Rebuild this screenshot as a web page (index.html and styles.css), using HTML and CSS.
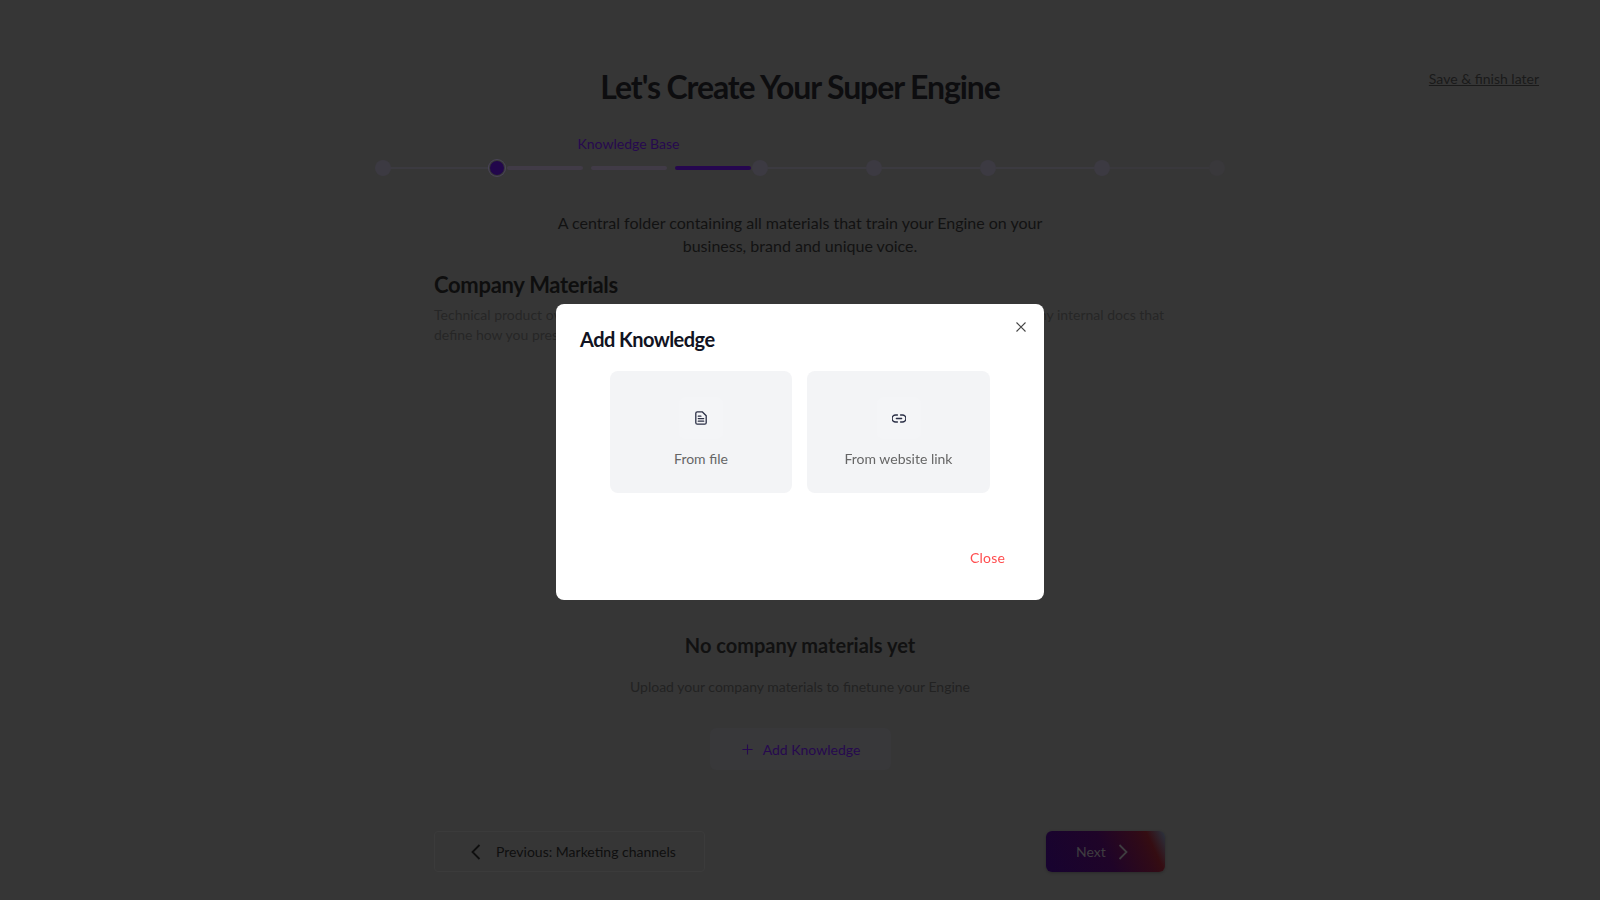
FILE: index.html
```html
<!DOCTYPE html>
<html lang="en">
<head>
<meta charset="utf-8">
<title>Let's Create Your Super Engine</title>
<link rel="stylesheet" href="styles.css">
</head>
<body>
<div class="page">
  <header class="header">
    <span></span>
    <h1 class="title">Let's Create Your Super Engine</h1>
    <a class="save-link" href="#">Save &amp; finish later</a>
  </header>

  <div class="stepper">
    <span class="step-label">Knowledge Base</span>
    <span class="dot"></span><span class="line"></span>
    <span class="dot dot-active"></span>
    <span class="segments"><i class="seg"></i><i class="seg"></i><i class="seg seg-on"></i></span>
    <span class="dot"></span><span class="line"></span>
    <span class="dot"></span><span class="line"></span>
    <span class="dot"></span><span class="line"></span>
    <span class="dot"></span><span class="line line-faint"></span>
    <span class="dot dot-faint"></span>
  </div>

  <p class="intro">A central folder containing all materials that train your Engine on your<br>business, brand and unique voice.</p>

  <main class="content">
    <h2 class="section-title">Company Materials</h2>
    <p class="section-text">Technical product overviews, feature lists, brand guidelines, case studies, tips, customer stories or any internal docs that<br>define how you present your company to customers.</p>

    <div class="empty">
      <h3 class="empty-title">No company materials yet</h3>
      <p class="empty-text">Upload your company materials to finetune your Engine</p>
      <button class="add-btn">
        <svg class="add-icon" viewBox="0 0 12 12"><path d="M6 .5v11M.5 6h11"/></svg>
        Add Knowledge
      </button>
    </div>

    <div class="nav">
      <button class="prev-btn">
        <svg class="chev" viewBox="0 0 10 16"><path d="M8.5 1 1.5 8l7 7"/></svg>
        Previous: Marketing channels
      </button>
      <button class="next-btn">
        Next
        <svg class="chev" viewBox="0 0 10 16"><path d="M1.5 1l7 7-7 7"/></svg>
      </button>
    </div>
  </main>
</div>

<div class="mask">
  <section class="modal">
    <button class="modal-x" aria-label="Close">
      <svg viewBox="0 0 10 10"><path d="M.5.5l9 9M9.5.5l-9 9"/></svg>
    </button>
    <h2 class="modal-title">Add Knowledge</h2>
    <div class="cards">
      <div class="card">
        <span class="card-icon">
          <svg class="icon-file" viewBox="0 0 12 14"><path d="M7.2.8H2.3C1.4.8.8 1.4.8 2.3v9.4c0 .9.6 1.5 1.5 1.5h7.4c.9 0 1.5-.6 1.5-1.5V4.8L7.2.8ZM3.3 5.2h2.6M3.3 7.6h5.4M3.3 10.2h5.4"/></svg>
        </span>
        <span class="card-text">From file</span>
      </div>
      <div class="card">
        <span class="card-icon">
          <svg class="icon-link" viewBox="0 0 14 9"><path d="M5.4 1H3.6a3.5 3.5 0 0 0 0 7h1.8M8.6 1h1.8a3.5 3.5 0 0 1 0 7H8.6M4.4 4.5h5.2"/></svg>
        </span>
        <span class="card-text">From website link</span>
      </div>
    </div>
    <div class="modal-foot"><button class="close-btn">Close</button></div>
  </section>
</div>
</body>
</html>
```

FILE: styles.css
```css
* { box-sizing: border-box; }
html, body { margin: 0; height: 100%; }
body {
  background: #363636;
  font-family: "Lato", "Liberation Sans", sans-serif;
  overflow: hidden;
  color: #0e0e0e;
}
button { font: inherit; background: none; border: 0; padding: 0; }
.page { height: 900px; display: flex; flex-direction: column; align-items: center; }

.header {
  width: 100%;
  display: grid;
  grid-template-columns: 1fr auto 1fr;
  padding: 67px 61px 0;
}
.title { margin: 0; font-size: 32px; line-height: 40px; font-weight: 700; letter-spacing: -1.1px; color: #0d0d0f; }
.save-link {
  justify-self: end;
  margin-top: 2px;
  font-size: 14px;
  line-height: 20px;
  letter-spacing: 0;
  color: #1a1a1a;
  text-decoration: underline;
}

.stepper {
  margin-top: 27px;
  width: 850px;
  display: grid;
  grid-template-columns: 16px 98px 16px 247px 16px 98px 16px 98px 16px 98px 16px 99px 16px;
  grid-template-rows: 20px 16px;
  row-gap: 6px;
  align-items: center;
}
.step-label {
  grid-column: 4;
  grid-row: 1;
  text-align: center;
  font-size: 14px;
  line-height: 20px;
  color: #26094f;
}
.dot { grid-row: 2; width: 16px; height: 16px; border-radius: 50%; background: #3c3a42; }
.dot-active { background: #22074b; box-shadow: 0 0 0 1px #363636, 0 0 0 2px #4a4558; width: 14px; height: 14px; margin: 1px; }
.dot-faint { background: #39383b; }
.line { grid-row: 2; height: 2px; background: #3b3a40; }
.line-faint { background: #39383c; }
.segments { grid-row: 2; display: flex; gap: 8px; padding: 0 1px 0 2px; }
.seg { flex: 1; height: 4px; border-radius: 2px; background: #413b47; }
.seg-on { background: #25064f; }

.intro {
  margin: 35px 0 0;
  text-align: center;
  font-size: 16px;
  line-height: 23px;
  letter-spacing: 0;
  color: #121212;
}

.content { width: 732px; flex: 1; display: flex; flex-direction: column; }
.section-title { margin: 14px 0 0; font-size: 22px; line-height: 28px; font-weight: 700; letter-spacing: -.3px; color: #0e0e0e; }
.section-text { margin: 6px 0 0; font-size: 14px; line-height: 20px; color: #262626; white-space: nowrap; }

.empty { margin-top: 286px; display: flex; flex-direction: column; align-items: center; }
.empty-title { margin: 0; font-size: 20px; line-height: 28px; font-weight: 700; color: #111; }
.empty-text { margin: 18px 0 0; font-size: 14px; line-height: 20px; color: #222; }
.add-btn {
  margin-top: 31px;
  width: 181px;
  height: 42px;
  display: flex;
  align-items: center;
  justify-content: center;
  gap: 10px;
  padding-left: 2px;
  border-radius: 6px;
  background: #38383a;
  font-size: 14px;
  color: #26094f;
}
.add-icon { width: 11px; height: 11px; fill: none; stroke: #26094f; stroke-width: 1.2; }

.nav { margin-top: 61px; padding-right: 1px; display: flex; justify-content: space-between; }
.prev-btn {
  width: 271px;
  height: 41px;
  display: flex;
  align-items: center;
  gap: 15px;
  padding-left: 36px;
  border: 1px solid #3b3b3b;
  border-radius: 4px;
  font-size: 14px;
  color: #0f0f0f;
}
.next-btn {
  width: 119px;
  height: 41px;
  display: flex;
  align-items: center;
  gap: 12px;
  padding-left: 30px;
  border-radius: 6px;
  background: linear-gradient(65deg, #170330 0%, #1f0428 50%, #2f0a18 78%, #350d12 86%, #2a3440 100%);
  box-shadow: 0 1px 3px rgba(0,0,0,.25);
  font-size: 14px;
  color: #3f3d40;
}
.chev { width: 10px; height: 16px; fill: none; stroke-width: 1.8; stroke: currentColor; }

.mask {
  position: fixed;
  inset: 0;
  display: flex;
  align-items: flex-start;
  justify-content: center;
  padding-top: 304px;
}
.modal {
  position: relative;
  width: 488px;
  height: 296px;
  background: #fff;
  border-radius: 8px;
  padding: 22px 24px 0;
  display: flex;
  flex-direction: column;
}
.modal-x { position: absolute; top: 18px; right: 18px; width: 10px; height: 10px; display: flex; }
.modal-x svg { width: 10px; height: 10px; fill: none; stroke: #444; stroke-width: 1.1; }
.modal-title { margin: 0; font-size: 20px; line-height: 26px; font-weight: 700; letter-spacing: -.55px; color: #111322; }
.cards { margin-top: 19px; padding-left: 30px; display: flex; gap: 15px; }
.card {
  width: 182px;
  height: 122px;
  border-radius: 8px;
  background: #f3f4f6;
  display: flex;
  flex-direction: column;
  align-items: center;
  padding-top: 26px;
}
.card:last-child { width: 183px; }
.card-icon {
  width: 44px;
  height: 42px;
  display: flex;
  align-items: center;
  justify-content: center;
  border-radius: 6px;
  background: #f4f5f7;
}
.icon-file { width: 12px; height: 14px; fill: none; stroke: #2a2f45; stroke-width: 1.3; stroke-linejoin: round; stroke-linecap: round; }
.icon-link { width: 14px; height: 9px; fill: none; stroke: #2a2f45; stroke-width: 1.4; stroke-linecap: round; }
.card-text { margin-top: 10px; font-size: 14px; line-height: 20px; color: #666; }
.modal-foot { margin-top: auto; padding: 0 15px 32px 0; display: flex; justify-content: flex-end; }
.close-btn { font-size: 14px; line-height: 20px; letter-spacing: .2px; color: #ff4d4f; }
```
